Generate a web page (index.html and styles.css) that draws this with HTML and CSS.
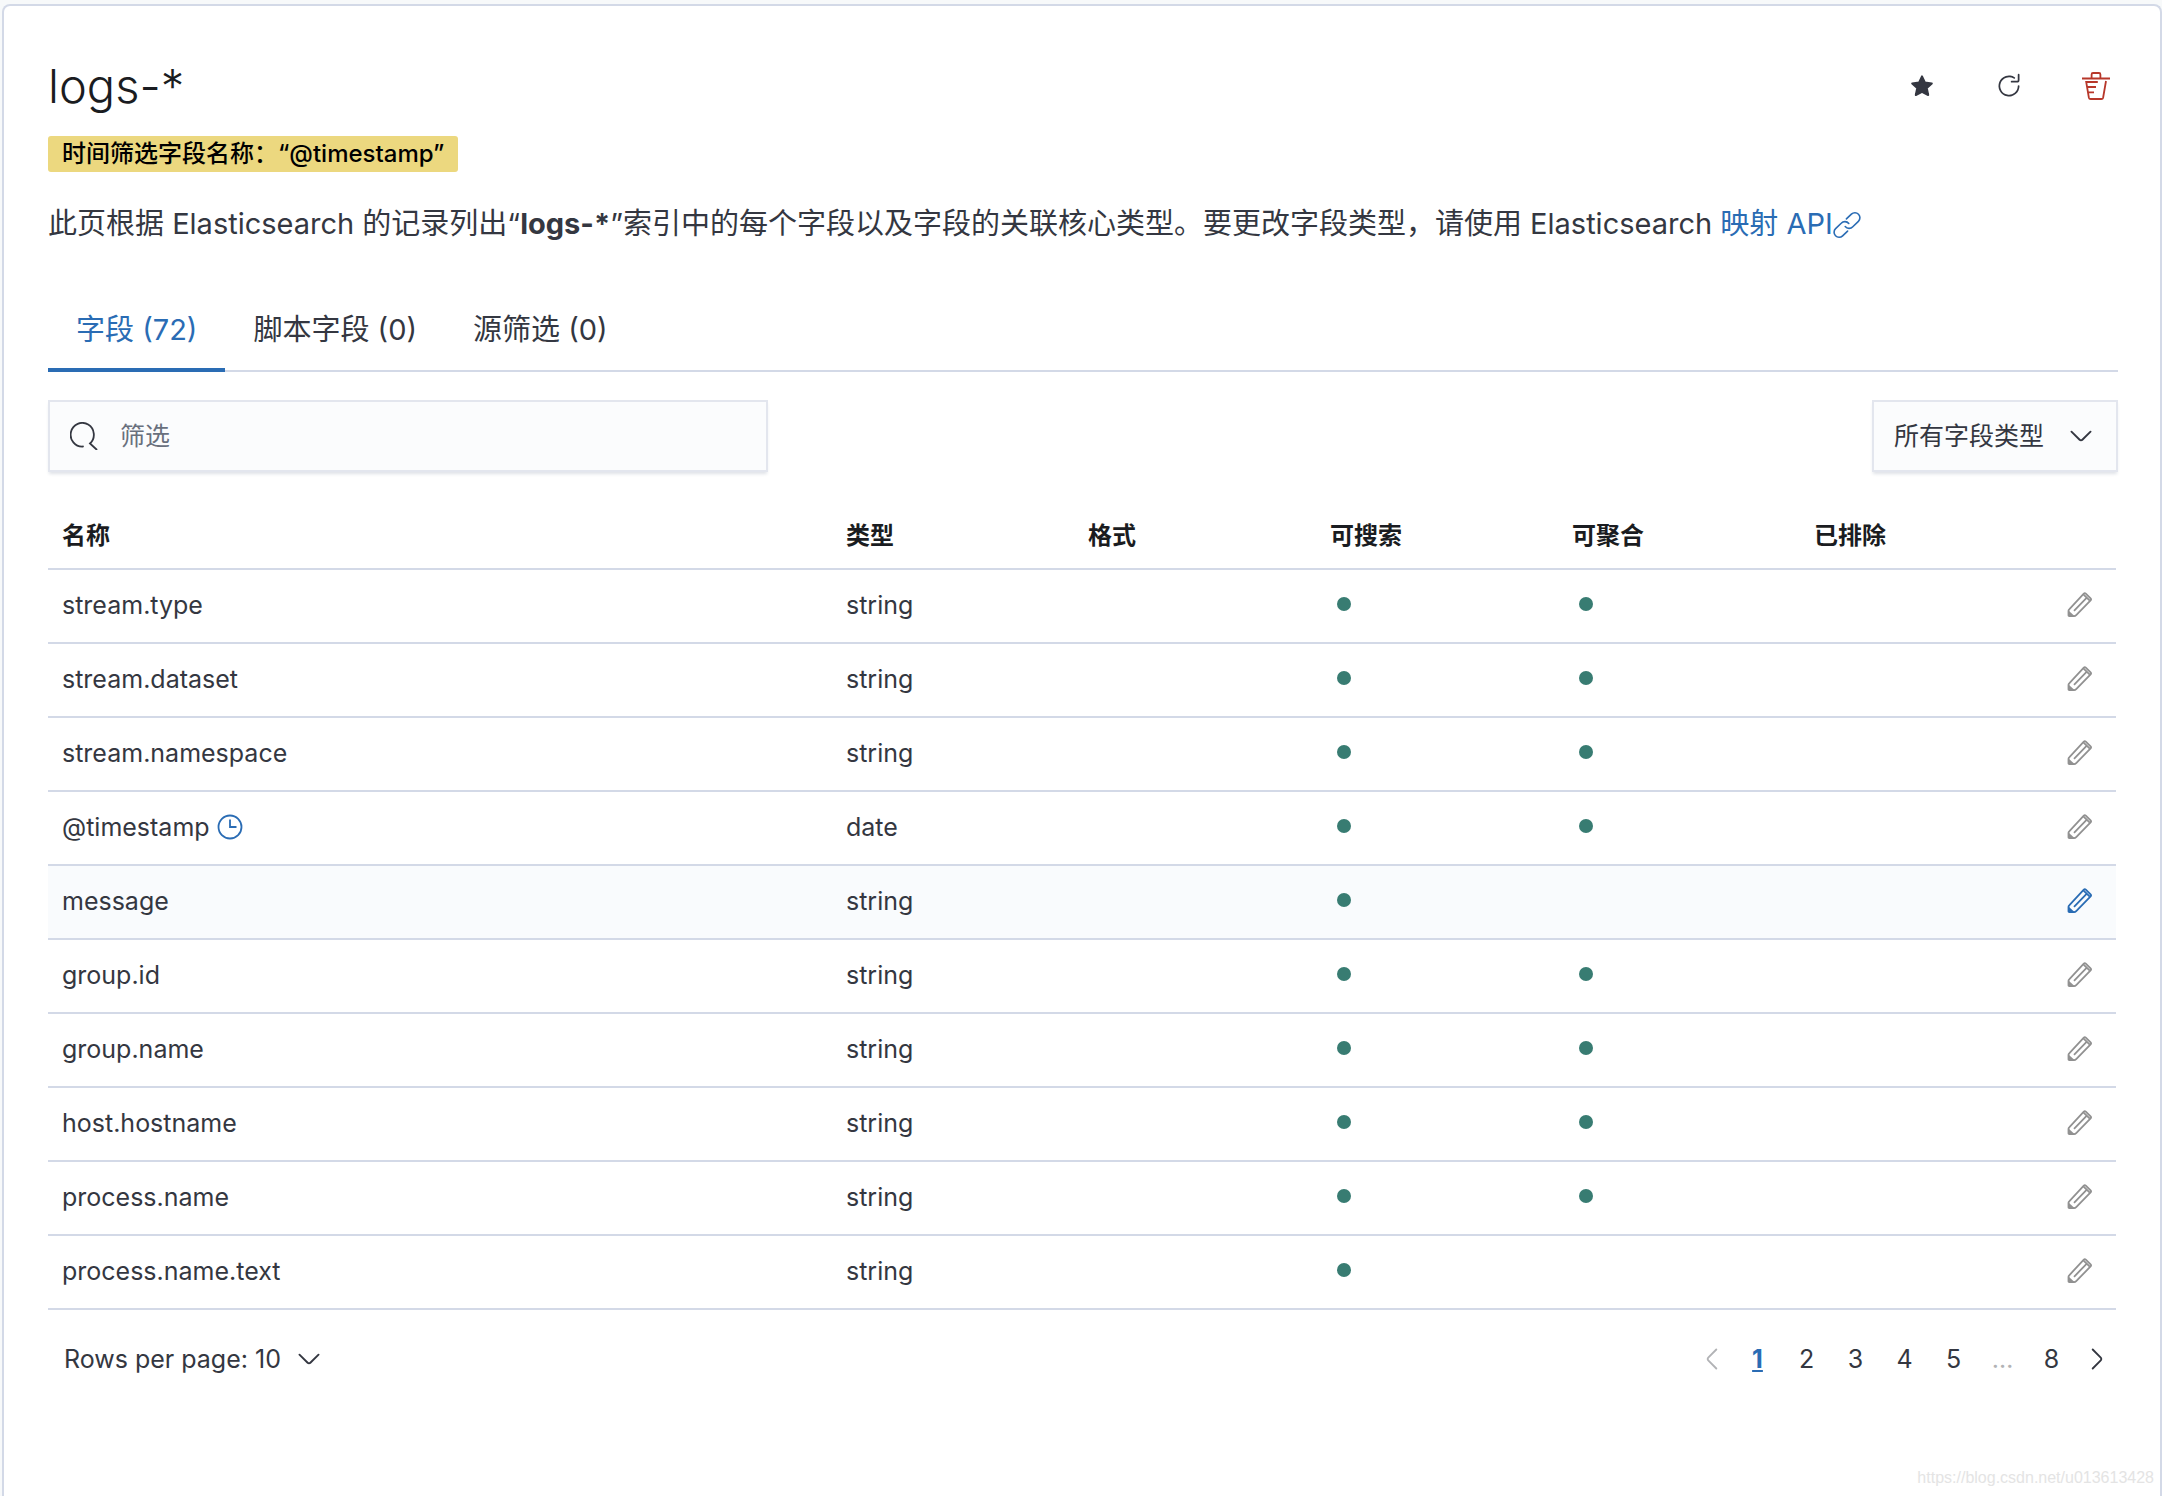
FILE: index.html
```html
<!DOCTYPE html>
<html lang="zh-CN">
<head>
<meta charset="utf-8">
<meta name="viewport" content="width=device-width, initial-scale=1">
<title>logs-*</title>
<link rel="stylesheet" href="styles.css">
</head>
<body>
<svg class="sprite" aria-hidden="true">
  <symbol id="i-pencil" viewBox="0 0 28 28">
    <path d="M3.2 18.3 17.8 2.6q1-1 2 0l4.800 4.800q1 1 0 2L10.200 24.200q-.9.900-2.200.9H3.400q-.9 0-.9-.9V20q0-1 .7-1.700z" fill="none" stroke="currentColor" stroke-width="1.800"/>
    <path d="M2.500 19.500 8.800 25.200H3.400q-.9 0-.9-.9z" fill="currentColor"/>
    <path d="M8 19.800 20.800 6.600M17.600 3.600l6.200 6" fill="none" stroke="currentColor" stroke-width="1.800"/>
  </symbol>
  <symbol id="i-dot" viewBox="0 0 16 16"><circle cx="8" cy="8" r="4" fill="currentColor"/></symbol>
  <symbol id="i-down" viewBox="0 0 16 16"><path fill="currentColor" d="M13.069 5.157L8.384 9.768a.546.546 0 01-.768 0L2.930 5.158a.552.552 0 00-.771 0 .53.53 0 000 .759l4.684 4.610c.641.631 1.672.630 2.312 0l4.684-4.610a.53.53 0 000-.760.552.552 0 00-.771 0z"/></symbol>
</svg>
<main class="panel">
  <header class="head">
    <h1 class="title">logs-*</h1>
    <div class="actions">
      <button class="icon-btn" type="button" aria-label="设为默认索引">
        <svg class="icon" viewBox="0 0 28 28"><path d="M14 4.400 17 10.600l6.800.9-5 4.600 1.400 6.900L14 19.800 7.800 23l1.400-6.900-5-4.600 6.800-.9z" fill="currentColor" stroke="currentColor" stroke-width="2" stroke-linejoin="round"/></svg>
      </button>
      <button class="icon-btn" type="button" aria-label="刷新">
        <svg class="icon" viewBox="0 0 16 16"><path fill="currentColor" d="M11.228 2.942a.5.5 0 11-.538.842A5 5 0 1013 8a.5.5 0 111 0 6 6 0 11-2.772-5.058zM14 1.500v3A1.500 1.500 0 0112.500 6h-3a.5.5 0 010-1h3a.5.5 0 00.5-.5v-3a.5.5 0 111 0z"/></svg>
      </button>
      <button class="icon-btn danger" type="button" aria-label="删除">
        <svg class="icon" viewBox="0 0 28 28" fill="none" stroke="currentColor" stroke-width="1.800"><path d="M0 6.500h28M9.600 6.500V2.400q0-1.400 1.400-1.400h6q1.400 0 1.400 1.400v4.100M15.800 10H4.200l2.700 15.700q.3 1.300 1.700 1.300h10.800q1.400 0 1.700-1.300L24 9M5 15h9M6 20.300h6"/></svg>
      </button>
    </div>
  </header>
  <p class="badge">时间筛选字段名称：“@timestamp”</p>
  <p class="intro">此页根据 Elasticsearch 的记录列出“<strong>logs-*</strong>”索引中的每个字段以及字段的关联核心类型。要更改字段类型，请使用 Elasticsearch <a class="link" href="#api">映射 API<svg class="icon link-icon" viewBox="0 0 28 28" fill="none" stroke="currentColor" stroke-width="1.600" stroke-linecap="round"><path d="M12.200 15.500a5 5 0 0 0 7.600.2l5.600-5.400a5 5 0 0 0-7-7.200l-5 4.800"/><path d="M15.800 12.500a5 5 0 0 0-7.600-.2l-5.600 5.400a5 5 0 0 0 7 7.200l5-4.800"/></svg></a></p>

  <div class="tabs" role="tablist">
    <button class="tab active" type="button" role="tab" aria-selected="true">字段 (72)</button>
    <button class="tab" type="button" role="tab" aria-selected="false">脚本字段 (0)</button>
    <button class="tab" type="button" role="tab" aria-selected="false">源筛选 (0)</button>
  </div>

  <div class="filters">
    <label class="control search">
      <svg class="icon" viewBox="0 0 28 28" fill="none" stroke="currentColor" stroke-width="1.800" stroke-linecap="round"><path d="M13 24.500A11.600 11.800 0 1 1 20 21.500l6.500 6"/></svg>
      <input class="search-input" type="search" placeholder="筛选" aria-label="筛选">
    </label>
    <div class="control type-filter">
      <select class="select" aria-label="字段类型"><option>所有字段类型</option></select>
      <svg class="icon caret"><use href="#i-down"/></svg>
    </div>
  </div>

  <table class="fields">
    <colgroup><col><col class="c-data"><col class="c-data"><col class="c-data"><col class="c-data"><col class="c-data"><col class="c-edit"></colgroup>
    <thead>
      <tr><th>名称</th><th>类型</th><th>格式</th><th>可搜索</th><th>可聚合</th><th>已排除</th><th></th></tr>
    </thead>
    <tbody>
      <tr><td>stream.type</td><td>string</td><td></td><td><svg class="icon dot"><use href="#i-dot"/></svg></td><td><svg class="icon dot"><use href="#i-dot"/></svg></td><td></td><td><button class="edit" type="button" aria-label="编辑"><svg class="icon"><use href="#i-pencil"/></svg></button></td></tr>
      <tr><td>stream.dataset</td><td>string</td><td></td><td><svg class="icon dot"><use href="#i-dot"/></svg></td><td><svg class="icon dot"><use href="#i-dot"/></svg></td><td></td><td><button class="edit" type="button" aria-label="编辑"><svg class="icon"><use href="#i-pencil"/></svg></button></td></tr>
      <tr><td>stream.namespace</td><td>string</td><td></td><td><svg class="icon dot"><use href="#i-dot"/></svg></td><td><svg class="icon dot"><use href="#i-dot"/></svg></td><td></td><td><button class="edit" type="button" aria-label="编辑"><svg class="icon"><use href="#i-pencil"/></svg></button></td></tr>
      <tr><td><span class="with-icon">@timestamp<svg class="icon clock" viewBox="0 0 28 28" fill="none" stroke="currentColor" stroke-width="1.800"><circle cx="14" cy="14" r="11.500"/><path d="M14 6.500V14h6.500"/></svg></span></td><td>date</td><td></td><td><svg class="icon dot"><use href="#i-dot"/></svg></td><td><svg class="icon dot"><use href="#i-dot"/></svg></td><td></td><td><button class="edit" type="button" aria-label="编辑"><svg class="icon"><use href="#i-pencil"/></svg></button></td></tr>
      <tr class="current"><td>message</td><td>string</td><td></td><td><svg class="icon dot"><use href="#i-dot"/></svg></td><td></td><td></td><td><button class="edit" type="button" aria-label="编辑"><svg class="icon"><use href="#i-pencil"/></svg></button></td></tr>
      <tr><td>group.id</td><td>string</td><td></td><td><svg class="icon dot"><use href="#i-dot"/></svg></td><td><svg class="icon dot"><use href="#i-dot"/></svg></td><td></td><td><button class="edit" type="button" aria-label="编辑"><svg class="icon"><use href="#i-pencil"/></svg></button></td></tr>
      <tr><td>group.name</td><td>string</td><td></td><td><svg class="icon dot"><use href="#i-dot"/></svg></td><td><svg class="icon dot"><use href="#i-dot"/></svg></td><td></td><td><button class="edit" type="button" aria-label="编辑"><svg class="icon"><use href="#i-pencil"/></svg></button></td></tr>
      <tr><td>host.hostname</td><td>string</td><td></td><td><svg class="icon dot"><use href="#i-dot"/></svg></td><td><svg class="icon dot"><use href="#i-dot"/></svg></td><td></td><td><button class="edit" type="button" aria-label="编辑"><svg class="icon"><use href="#i-pencil"/></svg></button></td></tr>
      <tr><td>process.name</td><td>string</td><td></td><td><svg class="icon dot"><use href="#i-dot"/></svg></td><td><svg class="icon dot"><use href="#i-dot"/></svg></td><td></td><td><button class="edit" type="button" aria-label="编辑"><svg class="icon"><use href="#i-pencil"/></svg></button></td></tr>
      <tr><td>process.name.text</td><td>string</td><td></td><td><svg class="icon dot"><use href="#i-dot"/></svg></td><td></td><td></td><td><button class="edit" type="button" aria-label="编辑"><svg class="icon"><use href="#i-pencil"/></svg></button></td></tr>
    </tbody>
  </table>

  <footer class="footer">
    <div class="per-page">
      <select class="select" aria-label="Rows per page"><option>Rows per page: 10</option></select>
      <svg class="icon caret"><use href="#i-down"/></svg>
    </div>
    <nav class="pages" aria-label="分页">
      <button class="page step" type="button" disabled aria-label="上一页"><svg class="icon turn-left"><use href="#i-down"/></svg></button>
      <button class="page on" type="button" aria-current="page">1</button>
      <button class="page" type="button">2</button>
      <button class="page" type="button">3</button>
      <button class="page" type="button">4</button>
      <button class="page" type="button">5</button>
      <span class="page gap">…</span>
      <button class="page" type="button">8</button>
      <button class="page step" type="button" aria-label="下一页"><svg class="icon turn-right"><use href="#i-down"/></svg></button>
    </nav>
  </footer>
</main>
<div class="watermark">https://blog.csdn.net/u013613428</div>
</body>
</html>
```
FILE: styles.css
```css
* { box-sizing: border-box; }

body {
  margin: 0;
  padding: 4px 0 0 2px;
  background: #f7f9fa;
  color: #343741;
  font-family: Inter, "Noto Sans CJK SC", sans-serif;
  font-size: 25px;
  line-height: 36px;
}

button, input, select {
  margin: 0;
  padding: 0;
  border: 0;
  background: none;
  color: inherit;
  font: inherit;
}

.sprite { display: none; }

.icon {
  display: block;
  flex: none;
  width: 28px;
  height: 28px;
}

.panel {
  min-height: calc(100vh - 4px);
  padding: 44px 42px 0 44px;
  border: 2px solid #d3d9e7;
  border-bottom: 0;
  border-radius: 8px 8px 0 0;
  background: #fff;
}

.head {
  display: flex;
  justify-content: space-between;
  align-items: center;
  height: 72px;
}

.title {
  margin: 0;
  color: #1a1c21;
  font-size: 47px;
  font-weight: 300;
  line-height: 72px;
}

.actions { display: flex; gap: 15px; }

.icon-btn {
  display: grid;
  place-items: center;
  width: 72px;
  height: 72px;
}

.actions .icon-btn:last-child { margin-right: -14px; }

.danger { color: #b7372a; }

.badge {
  width: fit-content;
  margin: 14px 0 0;
  padding: 0 14px;
  border-radius: 3px;
  background: #ecd87f;
  color: #000;
  font-size: 24px;
  font-weight: 500;
}

.intro {
  margin: 30px 0 0;
  font-size: 29px;
  line-height: 44px;
}

.link { color: #2a6cb4; text-decoration: none; }

.link-icon { display: inline-block; vertical-align: -5px; }

.tabs {
  display: flex;
  margin-top: 44px;
  box-shadow: inset 0 -2px #d3d9e7;
}

.tab {
  height: 82px;
  padding: 2px 28px 0;
  font-size: 29px;
  line-height: 40px;
  border-bottom: 4px solid transparent;
}

.tab.active { border-color: #2a6cb4; color: #2a6cb4; }

.filters {
  display: flex;
  justify-content: space-between;
  margin-top: 28px;
}

.control {
  height: 72px;
  border: 2px solid #e3e6ee;
  background: #fbfcfd;
  box-shadow: 0 3px 3px -1px rgba(152, 162, 179, 0.3);
}

.search {
  display: flex;
  align-items: center;
  gap: 22px;
  width: 720px;
  padding: 0 20px;
}

.search-input { flex: 1; min-width: 0; outline: 0; }
.search-input::placeholder { color: #69707d; opacity: 1; }

.type-filter, .per-page {
  display: grid;
  align-items: center;
}

.select {
  grid-area: 1 / 1;
  appearance: none;
  height: 36px;
  padding-right: 42px;
}

.caret {
  grid-area: 1 / 1;
  justify-self: end;
  pointer-events: none;
}

.type-filter { padding: 0 21px 0 20px; }

.type-filter .select { padding-right: 50px; }

.fields {
  width: calc(100% - 2px);
  margin-top: 28px;
  border-collapse: separate;
  border-spacing: 0;
  table-layout: fixed;
}

.c-data { width: 242px; }
.c-edit { width: 74px; }

th, td {
  height: 74px;
  padding: 0 14px 2px;
  border-bottom: 2px solid #d3d9e7;
  text-align: left;
}

th {
  height: 70px;
  padding: 4px 14px 0;
  color: #1a1c21;
  font-size: 24px;
  font-weight: 700;
}

.current td { background: #f9fbfd; }

.with-icon { display: flex; align-items: center; gap: 6px; }

.clock { color: #2a6cb4; }

.dot { margin-bottom: 2px; color: #387c72; }

.edit { display: block; padding: 0 10px; color: #919191; }

.current .edit { color: #2a6cb4; }

.footer {
  display: flex;
  justify-content: space-between;
  align-items: center;
  margin-top: 13px;
  padding-left: 16px;
}

.pages { display: flex; }

.page {
  display: grid;
  place-items: center;
  width: 49px;
  height: 72px;
}

.page.step { width: 42px; }

.page.on {
  color: #2a6cb4;
  font-weight: 700;
  text-decoration: underline;
}

.page:disabled, .gap { color: #b2b3b6; }

.turn-left { transform: rotate(90deg); }
.turn-right { transform: rotate(-90deg); }

.watermark {
  position: absolute;
  right: 8px;
  bottom: 8px;
  color: #e4e4e4;
  font-family: "Liberation Sans", sans-serif;
  font-size: 16px;
  line-height: 20px;
}
```
